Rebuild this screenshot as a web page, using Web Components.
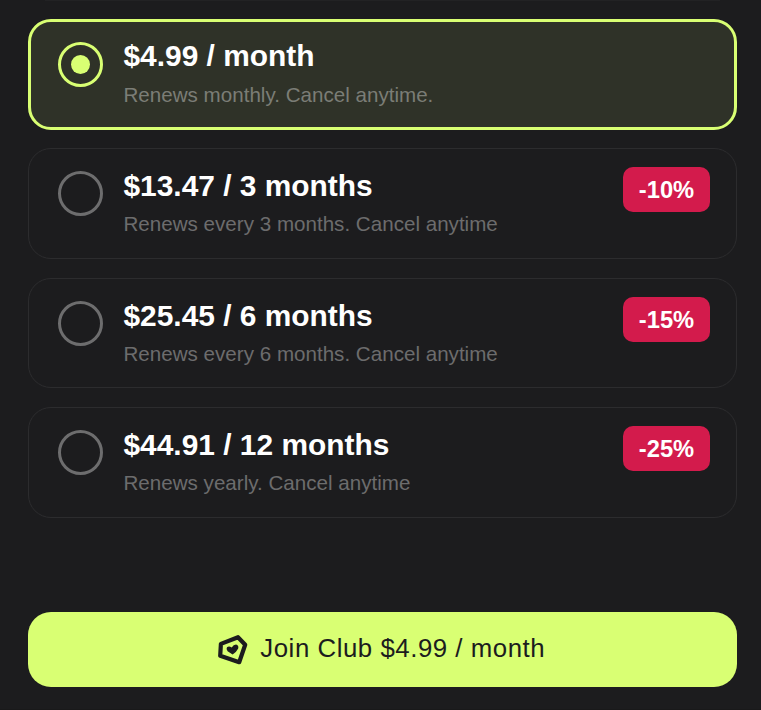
<!DOCTYPE html>
<html lang="en"><head><meta charset="utf-8"><title>Join Club</title>
<style>
html{background:#1c1c1e}
body{margin:0;height:710px;overflow:hidden;font-family:"Liberation Sans",Arial,sans-serif}
</style></head><body>
<club-plans></club-plans>
<script>
class PlanCard extends HTMLElement{
  connectedCallback(){
    const off=this.getAttribute('discount');
    this.attachShadow({mode:'open'}).innerHTML=`
    <style>
    :host{display:flex;box-sizing:border-box;height:110.6px;border:1px solid #2c2c2e;border-radius:23px;padding:18px 26px 0 29px;color:#fff;align-items:flex-start}
    :host([selected]){border:3px solid #d9ff73;background:#2f3228;padding:15.6px 24px 0 27px}
    .radio{box-sizing:border-box;flex:none;width:45px;height:45px;margin-top:4px;border:3px solid #6d6d6e;border-radius:50%;display:grid;place-items:center}
    :host([selected]) .radio{border-color:#d9ff73}
    :host([selected]) .radio::after{content:"";width:19px;height:19px;border-radius:50%;background:#d9ff73}
    .text{flex:1;margin-left:20.5px;white-space:nowrap}
    .title{font-weight:700;font-size:29.9px;line-height:38px}
    .sub{font-size:20.6px;line-height:24px;margin-top:7px;color:#6c6c6d}
    :host([selected]) .title{position:relative;top:-.5px}
    :host([selected]) .sub{color:#7b7d76}
    .badge{box-sizing:border-box;width:87px;height:45px;border-radius:10px;background:#d31b4c;font-weight:700;font-size:23.7px;line-height:47px;text-align:center}
    </style>
    <div class="radio"></div>
    <div class="text"><div class="title"><slot name="price"></slot></div><div class="sub"><slot name="note"></slot></div></div>
    ${off?`<div class="badge">${off}</div>`:''}`;
  }
}
class JoinButton extends HTMLElement{
  connectedCallback(){
    this.attachShadow({mode:'open'}).innerHTML=`
    <style>
    :host{display:flex;align-items:center;justify-content:center;box-sizing:border-box;height:75px;padding:0 3px 2px 0;border-radius:23px;background:#d9ff73;color:#1c1c1e;font-size:25.8px;letter-spacing:.54px;white-space:nowrap}
    svg{width:34px;height:34px;margin:1px 10.5px 0 -1px}
    </style>
    <svg viewBox="0 0 34 34"><path d="M22 5.2 29.2 12.7 23.2 30.2 4.2 23.8 4.9 11.9Z" fill="none" stroke="#1c1c1e" stroke-width="4.2" stroke-linejoin="round"/><path d="M16.6 22.4 11.6 19.2Q9.8 17 11 15.3 13 13.8 15.7 15.5 17.5 12.4 20 12.4 23 13.3 22.2 16.4 20.6 19.8 16.6 22.4Z" fill="#1c1c1e"/></svg><span><slot></slot></span>`;
  }
}
class ClubPlans extends HTMLElement{
  connectedCallback(){
    this.attachShadow({mode:'open'}).innerHTML=`
    <style>
    :host{display:flex;flex-direction:column;box-sizing:border-box;height:710px;padding:0 24px 0 28px;border-bottom:1px solid #19191a}
    .edge{height:1px;margin:0 17px 18.2px;background:#222224;flex:none}
    .plans{display:flex;flex-direction:column;gap:18.7px}
    join-button{margin-top:94px}
    </style>
    <div class="edge"></div>
    <div class="plans">
    <plan-card selected><span slot="price">$4.99 / month</span><span slot="note">Renews monthly. Cancel anytime.</span></plan-card>
    <plan-card discount="-10%"><span slot="price">$13.47 / 3 months</span><span slot="note">Renews every 3 months. Cancel anytime</span></plan-card>
    <plan-card discount="-15%"><span slot="price">$25.45 / 6 months</span><span slot="note">Renews every 6 months. Cancel anytime</span></plan-card>
    <plan-card discount="-25%"><span slot="price">$44.91 / 12 months</span><span slot="note">Renews yearly. Cancel anytime</span></plan-card>
    </div>
    <join-button>Join Club $4.99 / month</join-button>`;
  }
}
customElements.define('plan-card',PlanCard);
customElements.define('join-button',JoinButton);
customElements.define('club-plans',ClubPlans);
</script></body></html>
